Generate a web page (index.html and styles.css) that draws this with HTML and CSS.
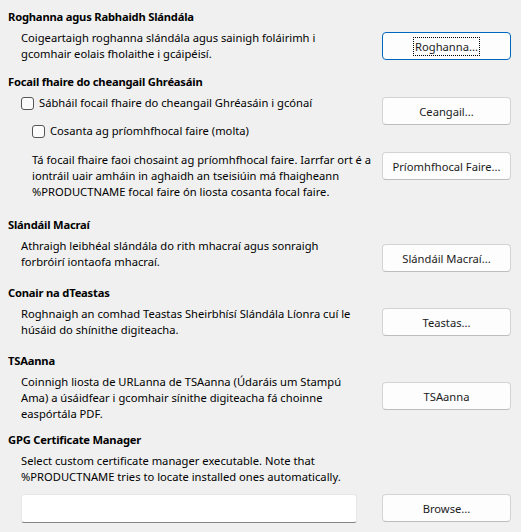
FILE: index.html
```html
<!DOCTYPE html>
<html>
<head>
<meta charset="utf-8">
<link rel="stylesheet" href="styles.css">
</head>
<body>
<div class="page">
  <section class="sec s1">
    <h2 class="head">Roghanna agus Rabhaidh Slándála</h2>
    <div class="row">
      <p class="desc">Coigeartaigh roghanna slándála agus sainigh foláirimh i<br>gcomhair eolais fholaithe i gcáipéisí.</p>
      <button class="btn focused"><span class="focus">Roghanna...</span></button>
    </div>
  </section>

  <section class="sec s2">
    <h2 class="head">Focail fhaire do cheangail Ghréasáin</h2>
    <div class="row r1">
      <div class="checks">
        <label class="check"><span class="box"></span>Sábháil focail fhaire do cheangail Ghréasáin i gcónaí</label>
        <label class="check sub"><span class="box"></span>Cosanta ag príomhfhocal faire (molta)</label>
      </div>
      <button class="btn">Ceangail...</button>
    </div>
    <div class="row r3">
      <p class="desc indent">Tá focail fhaire faoi chosaint ag príomhfhocal faire. Iarrfar ort é a<br>iontráil uair amháin in aghaidh an tseisiúin má fhaigheann<br>%PRODUCTNAME focal faire ón liosta cosanta focal faire.</p>
      <button class="btn">Príomhfhocal Faire...</button>
    </div>
  </section>

  <section class="sec s3">
    <h2 class="head">Slándáil Macraí</h2>
    <div class="row">
      <p class="desc">Athraigh leibhéal slándála do rith mhacraí agus sonraigh<br>forbróirí iontaofa mhacraí.</p>
      <button class="btn">Slándáil Macraí...</button>
    </div>
  </section>

  <section class="sec s4">
    <h2 class="head">Conair na dTeastas</h2>
    <div class="row">
      <p class="desc">Roghnaigh an comhad Teastas Sheirbhísí Slándála Líonra cuí le<br>húsáid do shínithe digiteacha.</p>
      <button class="btn">Teastas...</button>
    </div>
  </section>

  <section class="sec s5">
    <h2 class="head">TSAanna</h2>
    <div class="row">
      <p class="desc">Coinnigh liosta de URLanna de TSAanna (Údaráis um Stampú<br>Ama) a úsáidfear i gcomhair sínithe digiteacha fá choinne<br>easpórtála PDF.</p>
      <button class="btn">TSAanna</button>
    </div>
  </section>

  <section class="sec s6">
    <h2 class="head">GPG Certificate Manager</h2>
    <p class="desc solo">Select custom certificate manager executable. Note that<br>%PRODUCTNAME tries to locate installed ones automatically.</p>
    <div class="row r6">
      <input class="field" type="text">
      <button class="btn">Browse...</button>
    </div>
  </section>
</div>
</body>
</html>
```
FILE: styles.css
```css
html, body {
  margin: 0;
  padding: 0;
  background: #f0f0f0;
}
body {
  font-family: "Noto Sans", "Open Sans", sans-serif;
  font-size: 11.2px;
  color: #000;
  width: 521px;
  height: 532px;
  overflow: hidden;
}
.page {
  padding: 9px 10px 0 8px;
}
.sec {
  display: flex;
  flex-direction: column;
}
.head {
  margin: 0;
  font-size: 11.2px;
  font-weight: 700;
  line-height: 16px;
  letter-spacing: -0.2px;
  white-space: nowrap;
}
.row {
  display: grid;
  grid-template-columns: minmax(0, 1fr) 129px;
  column-gap: 16px;
  align-items: start;
  margin-top: 5px;
}
.desc {
  margin: 0;
  padding-left: 13px;
  line-height: 16px;
  white-space: nowrap;
}
.desc.indent {
  padding-left: 24px;
}
.btn {
  height: 28px;
  box-sizing: border-box;
  background: #fdfdfd;
  border: 1px solid #d3d3d3;
  border-bottom-color: #bdbdbd;
  border-radius: 4px;
  font-family: inherit;
  font-size: 11.2px;
  color: #1b1b1b;
  padding: 0;
}
.btn.focused {
  border-color: #0067c0;
}
.focus {
  outline: 1px dotted #000;
  outline-offset: 0;
  padding: 1px 1px;
}
.checks {
  display: flex;
  flex-direction: column;
  gap: 12px;
  padding-top: 5px;
}
.check {
  display: flex;
  align-items: center;
  padding-left: 13px;
  line-height: 16px;
  white-space: nowrap;
}
.box {
  width: 11px;
  height: 11px;
  border: 1px solid #555;
  border-radius: 3px;
  background: #fbfbfb;
  margin-right: 5px;
  flex: none;
}
.check.sub {
  padding-left: 24px;
}

.s1 .btn { margin-top: 2px; }
.s2 { margin-top: 12px; }
.s2 .r1 { margin-top: 0; }
.s2 .r1 .btn { margin-top: 7px; }
.s2 .r3 { margin-top: 13px; }
.s3 { margin-top: 17px; }
.s3 .btn { margin-top: 6px; }
.s4 { margin-top: 13px; }
.s4 .btn { margin-top: 2px; }
.s5 { margin-top: 15px; }
.s5 .btn { margin-top: 8px; }
.s6 { margin-top: 10px; }
.desc.solo { margin-top: 5px; }
.s6 .r6 { margin-top: 9px; }
.field {
  margin-left: 13px;
  height: 29px;
  box-sizing: border-box;
  background: #fff;
  border: 1px solid #e6e6e6;
  border-bottom: 1px solid #858585;
  border-radius: 3px;
  width: 336px;
}
```
